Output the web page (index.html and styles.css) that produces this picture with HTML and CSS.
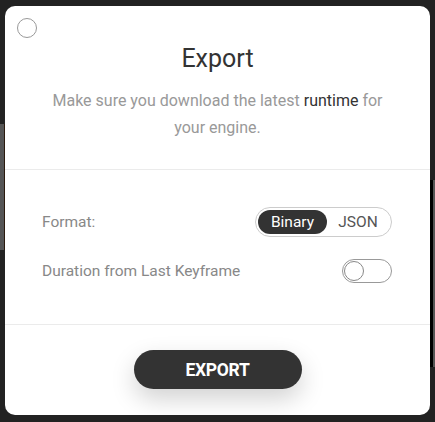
FILE: index.html
```html
<!DOCTYPE html>
<html lang="en">

<head>
    <meta charset="UTF-8">
    <meta name="viewport" content="width=device-width, initial-scale=1.0">
    <title>Export</title>
    <link rel="stylesheet" href="styles.css">
</head>

<body>
    <div class="backdrop">
        <div class="behind-left"></div>
        <div class="behind-right"></div>
    </div>

    <div class="modal">
        <button class="close" aria-label="Close"></button>

        <div class="modal-head">
            <h1 class="title">Export</h1>
            <p class="desc">Make sure you download the latest <a href="#">runtime</a> for your engine.</p>
        </div>

        <div class="modal-body">
            <div class="row">
                <span class="label">Format:</span>
                <div class="segment">
                    <span class="seg-item active">Binary</span>
                    <span class="seg-item">JSON</span>
                </div>
            </div>
            <div class="row row-switch">
                <span class="label">Duration from Last Keyframe</span>
                <div class="switch">
                    <span class="knob"></span>
                </div>
            </div>
        </div>

        <div class="modal-foot">
            <button class="export-btn">EXPORT</button>
        </div>
    </div>
</body>

</html>
```

FILE: styles.css
```css
* {
    margin: 0;
    padding: 0;
    box-sizing: border-box;
    font-family: Roboto, "Liberation Sans", sans-serif;
    font-weight: 400;
}

body {
    background-color: #222;
    width: 435px;
    height: 422px;
    overflow: hidden;
    position: relative;
}

/* stuff sitting behind the dialog */
.backdrop {
    position: absolute;
    inset: 0;
}
.behind-left {
    position: absolute;
    left: 0;
    top: 124px;
    width: 6px;
    height: 126px;
    background: #555;
    border-right: 2px solid #2a1a0e;
}
.behind-right {
    position: absolute;
    right: 0;
    top: 180px;
    width: 6px;
    height: 187px;
    background: #555;
    border-left: 4px solid #000;
}

.modal {
    position: relative;
    margin: 6px 5px 0 5px;
    width: 425px;
    height: 409px;
    background: #fff;
    border-radius: 10px;
    display: flex;
    flex-direction: column;
    overflow: hidden;
}

.close {
    position: absolute;
    left: 12px;
    top: 12px;
    width: 20px;
    height: 20px;
    border-radius: 50%;
    border: 1px solid #999;
    background: #fff;
    cursor: pointer;
}

.modal-head {
    text-align: center;
    padding: 37px 40px 28px;
    border-bottom: 1px solid #ebebeb;
}
.title {
    font-size: 25px;
    line-height: 32px;
    color: #333;
}
.desc {
    margin-top: 12px;
    font-size: 16px;
    line-height: 27px;
    color: #999;
}
.desc a {
    color: #333;
    text-decoration: none;
}

.modal-body {
    padding: 37px 38px 41px 37px;
    display: flex;
    flex-direction: column;
    gap: 22px;
    border-bottom: 1px solid #ebebeb;
}
.row {
    display: flex;
    justify-content: space-between;
    align-items: center;
}
.label {
    font-size: 15.5px;
    color: #888;
}

.segment {
    display: flex;
    align-items: center;
    border: 1px solid #ccc;
    border-radius: 15px;
    padding: 2px;
    width: 137px;
    height: 30px;
}
.seg-item {
    font-size: 15.5px;
    color: #555;
    height: 24px;
    line-height: 24px;
    border-radius: 12px;
    flex: 1;
    text-align: center;
}
.seg-item.active {
    flex: 0 0 69px;
    background: #333;
    color: #fff;
}

.switch {
    width: 50px;
    height: 24px;
    border: 1px solid #999;
    border-radius: 12px;
    padding: 1px;
    display: flex;
    align-items: center;
}
.knob {
    width: 20px;
    height: 20px;
    border-radius: 50%;
    border: 1px solid #888;
    background: #fff;
}

.modal-foot {
    flex: 1;
    display: flex;
    justify-content: center;
    padding-top: 25px;
}
.export-btn {
    width: 168px;
    height: 39px;
    border: none;
    border-radius: 20px;
    background: #333;
    color: #fff;
    font-size: 17.5px;
    font-weight: 700;
    letter-spacing: -0.3px;
    cursor: pointer;
    box-shadow: 0 10px 24px rgba(0, 0, 0, 0.18);
}
```
